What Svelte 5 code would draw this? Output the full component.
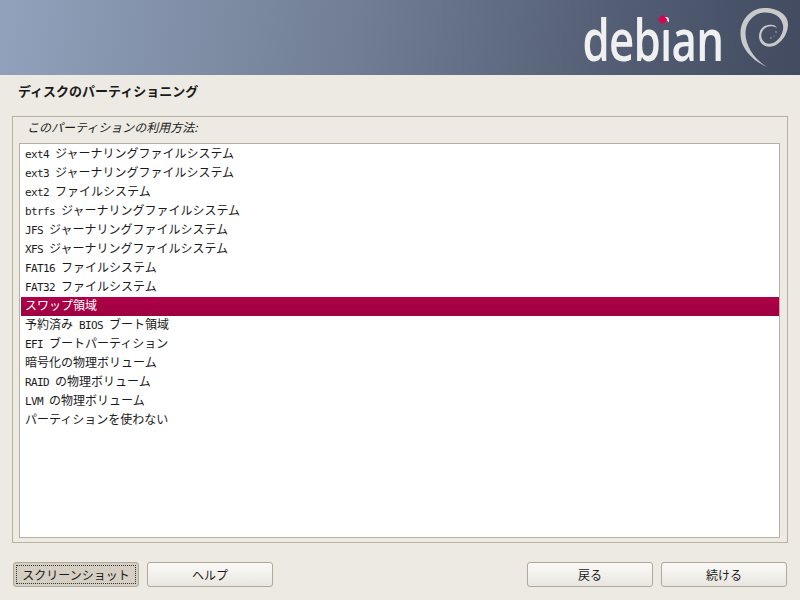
<script lang="ts">
  type Part = { t: string; lat?: boolean };

  const parts = (s: string): Part[] =>
    s.split(/([\x20-\x7e]+)/).filter(Boolean).map((t) => ({ t, lat: /^[\x20-\x7e]/.test(t) }));

  const rows = [
    "ext4 ジャーナリングファイルシステム",
    "ext3 ジャーナリングファイルシステム",
    "ext2 ファイルシステム",
    "btrfs ジャーナリングファイルシステム",
    "JFS ジャーナリングファイルシステム",
    "XFS ジャーナリングファイルシステム",
    "FAT16 ファイルシステム",
    "FAT32 ファイルシステム",
    "スワップ領域",
    "予約済み BIOS ブート領域",
    "EFI ブートパーティション",
    "暗号化の物理ボリューム",
    "RAID の物理ボリューム",
    "LVM の物理ボリューム",
    "パーティションを使わない",
  ];

  const selected = 8;
</script>

<div class="page">
  <header class="banner">
    <div class="brand">
      <span class="word">debian</span>
      <i class="dot"></i>
      <svg class="swirl" width="70" height="75" viewBox="0 0 70 75" aria-hidden="true">
        <path fill="#c9cacb" d="M37 67C22 60 10 48 10.5 33C11 18 22 8 35 8C48 8 58 15 58 24C58 32 54 40 46 45C40 48 33 47 30 41C27 34 31 26 38 25C42 24 46 25 47 28C44 26 40 26 37 27C32 29 30 35 32 39C34 44 40 45 45 42C51 38 54 31 53 25C51 16 43 12 34 12.5C24 13 16 22 15.5 32C15 46 25 60 37 67Z"/>
        <circle cx="46" cy="32" r="0.8" fill="#aeb1b7"/>
        <circle cx="41" cy="38" r="0.8" fill="#aeb1b7"/>
        <circle cx="44" cy="36" r="0.6" fill="#aeb1b7"/>
      </svg>
    </div>
  </header>

  <h1>ディスクのパーティショニング</h1>

  <section class="frame">
    <div class="caption">このパーティションの利用方法:</div>
    <ul>
      {#each rows as row, i}
        <li class:sel={i === selected}>
          {#each parts(row) as p}{#if p.lat}<span class="lat">{p.t}</span>{:else}{p.t}{/if}{/each}
        </li>
      {/each}
    </ul>
  </section>

  <footer>
    <button class="pressed"><span>スクリーンショット</span></button>
    <button>ヘルプ</button>
    <div class="gap"></div>
    <button>戻る</button>
    <button>続ける</button>
  </footer>
</div>

<style>
  :global(body) {
    margin: 0;
    background: #edeae4;
  }

  .page {
    width: 800px;
    height: 600px;
    display: flex;
    flex-direction: column;
    overflow: hidden;
    background: #edeae4;
    color: #1a1a1a;
    font-family: "Noto Sans CJK JP", sans-serif;
    font-size: 12px;
  }

  .banner {
    flex: none;
    height: 75px;
    display: flex;
    justify-content: flex-end;
    background: linear-gradient(97deg, #92a2bc 0%, #707d94 45%, #525d73 78%, #424b60 100%);
  }

  .brand {
    position: relative;
    display: flex;
    align-items: flex-start;
  }

  .word {
    display: block;
    font-family: "Open Sans", sans-serif;
    font-weight: 600;
    font-size: 58px;
    line-height: 78px;
    letter-spacing: -1px;
    color: #f0f0f0;
    transform: scaleX(0.756);
    transform-origin: right center;
    margin-right: 7px;
  }

  /* the red diamond stands in for the dot of the i */
  .dot {
    position: absolute;
    left: 122px;
    top: 16px;
    width: 7px;
    height: 7px;
    background: #d6064f;
    box-shadow: 3px 3px 0 2px #4e596f;
    transform: rotate(45deg);
  }

  h1 {
    margin: 0;
    padding: 7px 18px 0;
    height: 33px;
    box-sizing: border-box;
    font-size: 13px;
    line-height: 17px;
    font-weight: 700;
  }

  .frame {
    flex: none;
    margin: 8px 12px 0;
    padding: 0 7px 4px 6px;
    height: 427px;
    box-sizing: border-box;
    border: 1px solid #b8b1a2;
  }

  .caption {
    height: 20px;
    margin-bottom: 6px;
    padding-left: 8px;
    font-style: italic;
    line-height: 20px;
  }

  ul {
    list-style: none;
    margin: 0;
    padding: 1px 0 1px 1px;
    height: 395px;
    box-sizing: border-box;
    background: #fff;
    border: 1px solid #b8b1a2;
  }

  li {
    height: 19px;
    line-height: 15px;
    padding-left: 4px;
    white-space: pre;
  }

  li.sel {
    background: linear-gradient(#b00048, #9d0040);
    color: #fff;
  }

  .lat {
    font-family: "DejaVu Sans Mono", monospace;
    font-size: 11px;
    letter-spacing: -0.62px;
  }

  footer {
    flex: none;
    display: flex;
    gap: 8px;
    padding: 19px 13px 0;
  }

  .gap {
    flex: 1;
  }

  button {
    width: 126px;
    height: 25px;
    padding: 0;
    font: inherit;
    color: #1a1a1a;
    border: 1px solid #b0a898;
    border-radius: 3px;
    background: linear-gradient(#fbfaf8, #e9e6e0);
  }

  button.pressed {
    background: #d5cfc4;
    padding: 2px;
  }

  button.pressed span {
    display: flex;
    align-items: center;
    justify-content: center;
    height: 100%;
    box-sizing: border-box;
    border: 1px dotted #333;
  }
</style>
